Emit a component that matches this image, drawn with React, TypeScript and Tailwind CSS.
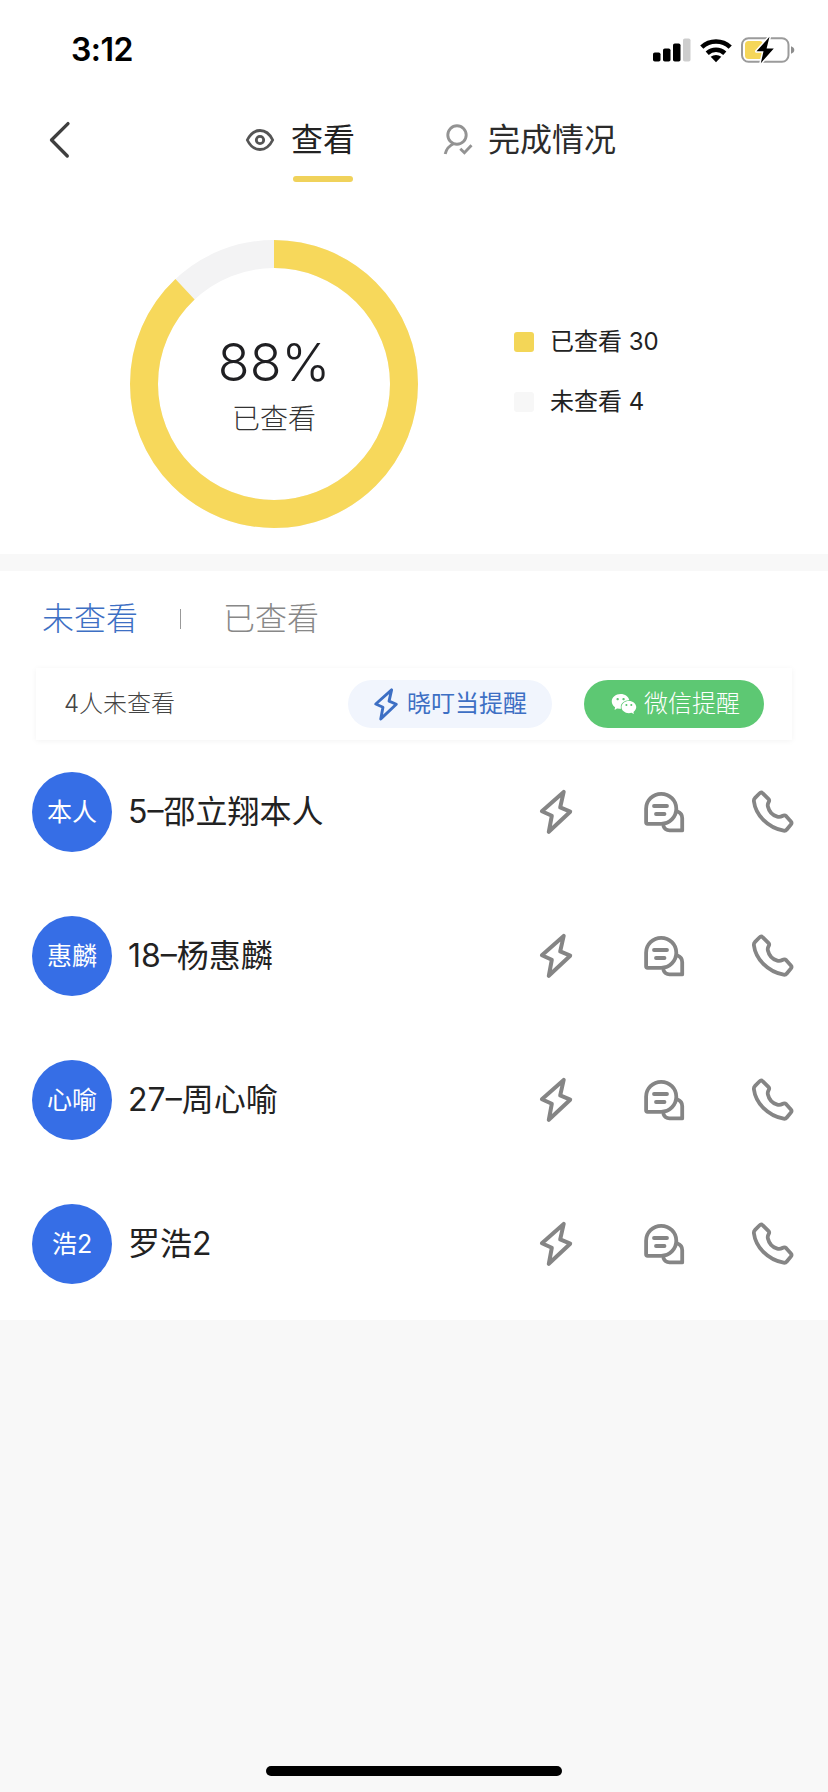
import type { ReactNode } from 'react';
import { AiFillWechat } from 'react-icons/ai';

type Student = {
  id: number;
  short: string;
  name: string;
};

const VIEWED = 30;
const NOT_VIEWED = 4;

const students: Student[] = [
  { id: 1, short: '本人', name: '5–邵立翔本人' },
  { id: 2, short: '惠麟', name: '18–杨惠麟' },
  { id: 3, short: '心喻', name: '27–周心喻' },
  { id: 4, short: '浩2', name: '罗浩2' },
];

function BoltIcon({ className, strokeWidth = 4 }: { className?: string; strokeWidth?: number }) {
  return (
    <svg viewBox="0 0 44 48" fill="none" stroke="currentColor" strokeWidth={strokeWidth} strokeLinejoin="round" className={className}>
      <path d="M29.7 3.9 26.2 19.4 36.2 23.7 14.8 43.8 17.8 27.8 7.9 23.3Z" />
    </svg>
  );
}

function ChatIcon() {
  return (
    <svg viewBox="0 0 48 48" fill="none" stroke="currentColor" strokeWidth="3.8" strokeLinecap="round" strokeLinejoin="round" className="w-12 h-12">
      <path d="M8.1 20.8a15.1 15 0 0 1 30.2 0 15.1 15 0 0 1-15.1 15H9.6a1.5 1.5 0 0 1-1.5-1.5Z" />
      <path d="M16 18h13M18 26h8.5" />
      <path d="M39.5 23.6c3 1.2 4.7 3.4 4.7 6.6v12.2H31.5c-3 0-5-1.4-6-4.2" />
    </svg>
  );
}

function PhoneIcon() {
  return (
    <svg viewBox="0 0 48 48" fill="none" stroke="currentColor" strokeWidth="3.8" strokeLinejoin="round" className="w-12 h-12">
      <path d="M16.8 5.3 22.6 11.2c.8.8.7 1.7.1 2.7-.9 1.500-1.200 3-.8 4.600 1.200 5.200 4.600 8.800 9.400 10.100 1.800.5 3.400.3 5-.6 1.400-.8 2.800-.9 3.900.2l4.700 5.300c.8.9.8 1.900.1 2.800l-4.200 5.200c-.8 1-1.800 1.400-3.200 1.200C21.500 39.600 9.600 26.800 7.900 13.200c-.2-1.500.2-2.400 1.200-3.400l4.300-4.300c1.100-1.100 2.300-1.200 3.400-.2Z" />
    </svg>
  );
}

function StatusBar() {
  return (
    <div className="flex items-center justify-between h-[100px] pl-[71px] pr-[33px]">
      <span className="text-[32px] leading-none font-semibold text-black tracking-[-0.5px]">3:12</span>
      <div className="flex items-center gap-[9px]">
        <svg viewBox="0 0 38 24" className="w-[38px] h-6">
          <rect x="0" y="14.500" width="7.500" height="9" rx="1.800" />
          <rect x="10" y="10.500" width="7.500" height="13" rx="1.800" />
          <rect x="20" y="5.500" width="7.500" height="18" rx="1.800" />
          <rect x="30" y="0.500" width="7.500" height="23" rx="1.800" fill="#cdcdcd" />
        </svg>
        <svg viewBox="0 0 32 25" fill="none" stroke="#000" strokeWidth="4.600" className="w-8 h-[25px]">
          <path d="M1.800 9.200a20.500 20.500 0 0 1 28.400 0" />
          <path d="M7.200 15.200a13 13 0 0 1 17.600 0" />
          <path d="M10.700 18.800a8.500 8.500 0 0 1 10.600 0L16 24.300Z" fill="#000" stroke="none" />
        </svg>
        <svg viewBox="0 0 54 28" className="w-[54px] h-7">
          <rect x="1" y="2.200" width="46.500" height="23.600" rx="6.500" fill="none" stroke="#9b9b9b" strokeWidth="2" />
          <path d="M50 10.200q3.300 1.200 3.300 3.800T50 17.800Z" fill="#8d8d8d" />
          <rect x="4" y="5" width="18" height="18" rx="3.500" fill="#f5d659" />
          <path d="M28.500.8 15.500 15.300h7L19.800 27.200 32.800 12.400h-7.200Z" stroke="#fff" strokeWidth="3" paintOrder="stroke" strokeLinejoin="round" />
        </svg>
      </div>
    </div>
  );
}

function NavTabs() {
  return (
    <div className="flex h-[100px] pl-[49px]">
      <svg viewBox="0 0 22 40" fill="none" stroke="#3f3f3f" strokeWidth="3.300" strokeLinecap="round" strokeLinejoin="round" className="w-[22px] h-10 mt-5">
        <path d="M19 3.600 2.500 20 18.300 36" />
      </svg>
      <div className="flex items-start ml-[174px] pt-4">
        <svg viewBox="0 0 30 24" fill="none" stroke="#555" strokeWidth="2.800" className="w-[30px] h-6 mt-3">
          <path d="M2.300 12C5.500 5.400 10 2.500 15 2.500S24.500 5.400 27.700 12C24.500 18.600 20 21.500 15 21.500S5.500 18.600 2.300 12Z" strokeLinejoin="round" />
          <circle cx="15" cy="12" r="3.700" />
        </svg>
        <div className="flex flex-col items-center ml-4">
          <span className="text-[32px] leading-[48px] text-[#222]">查看</span>
          <span className="w-[60px] h-1.5 mt-3 rounded-full bg-[#f0d25b]" />
        </div>
      </div>
      <div className="flex items-start ml-[87px] pt-4">
        <svg viewBox="0 0 32 32" fill="none" stroke="#939393" strokeWidth="2.900" className="w-8 h-8 mt-[7px]">
          <circle cx="15" cy="12" r="9.200" />
          <path d="M12 20.500C7.500 22.500 4.300 26 3.200 31" />
          <path d="M18.300 25.800 22.400 29.700 29.500 22.300" />
        </svg>
        <span className="ml-[14px] text-[32px] leading-[48px] text-[#2b2b2b]">完成情况</span>
      </div>
    </div>
  );
}

function Donut({ percent }: { percent: number }) {
  return (
    <div className="grid place-items-center w-72 h-72">
      <svg viewBox="0 0 288 288" fill="none" strokeWidth="28" className="col-start-1 row-start-1 w-72 h-72 -rotate-90">
        <circle cx="144" cy="144" r="130" stroke="#f3f3f4" />
        <circle cx="144" cy="144" r="130" stroke="#f7d85b" pathLength="100" strokeDasharray={`${percent} 100`} />
      </svg>
      <div className="col-start-1 row-start-1 flex flex-col items-center pt-1">
        <span className="text-[52px] leading-[60px] font-light text-[#1f1f22]">88%</span>
        <span className="mt-1.5 text-[28px] leading-10 font-light text-[#333]">已查看</span>
      </div>
    </div>
  );
}

function LegendItem({ color, label }: { color: string; label: string }) {
  return (
    <li className="flex items-center h-[60px]">
      <span className={`w-5 h-5 rounded-[3px] ${color}`} />
      <span className="ml-4 text-2xl leading-9 text-[#222]">{label}</span>
    </li>
  );
}

function ReminderButton({ className, children }: { className: string; children: ReactNode }) {
  return (
    <button type="button" className={`flex items-center h-12 rounded-full text-2xl leading-none ${className}`}>
      {children}
    </button>
  );
}

function StudentRow({ student }: { student: Student }) {
  return (
    <li className="flex items-center h-36 pl-8 pr-[34px]">
      <span className="flex items-center justify-center w-20 h-20 rounded-full bg-[#366ee6] text-[25px] leading-none text-white">
        {student.short}
      </span>
      <span className="ml-4 text-[32px] leading-[48px] text-[#222]">{student.name}</span>
      <div className="flex items-center gap-[60px] ml-auto text-[#858585]">
        <BoltIcon className="w-11 h-12" />
        <ChatIcon />
        <PhoneIcon />
      </div>
    </li>
  );
}

export default function App() {
  return (
    <div className="flex flex-col w-[828px] h-[1792px] bg-[#f8f8f8] font-[Inter,'Noto_Sans_CJK_SC',sans-serif]">
      <header className="h-[554px] bg-white">
        <StatusBar />
        <NavTabs />
        <section className="flex pt-10 pl-[130px]">
          <Donut percent={88} />
          <ul className="pt-[72px] ml-24">
            <LegendItem color="bg-[#f3d657]" label={`已查看 ${VIEWED}`} />
            <LegendItem color="bg-[#f7f7f7]" label={`未查看 ${NOT_VIEWED}`} />
          </ul>
        </section>
      </header>

      <main className="h-[749px] mt-[17px] bg-white">
        <nav className="flex items-center h-24 pl-[42px] text-[32px] leading-[48px] font-light">
          <span className="text-[#3d6fc4]">未查看</span>
          <span className="w-px h-5 mx-[42px] bg-[#999]" />
          <span className="text-[#888]">已查看</span>
        </nav>

        <div className="flex items-center h-[72px] mt-px mx-9 pl-7 pr-7 bg-white shadow-[0_1px_6px_rgba(0,0,0,0.05)]">
          <span className="text-2xl leading-9 font-light text-[#444]">{NOT_VIEWED}人未查看</span>
          <ReminderButton className="w-[204px] ml-auto pl-[22px] bg-[#f1f5fd] text-[#3d6fc4]">
            <BoltIcon className="w-8 h-[35px]" />
            <span className="ml-[5px]">晓叮当提醒</span>
          </ReminderButton>
          <ReminderButton className="w-[180px] ml-8 pl-[26px] bg-[#5dc873] text-white font-light">
            <AiFillWechat className="w-7 h-7" />
            <span className="ml-1.5">微信提醒</span>
          </ReminderButton>
        </div>

        <ul>
          {students.map((student) => (
            <StudentRow key={student.id} student={student} />
          ))}
        </ul>
      </main>

      <div className="w-[296px] h-2.5 mx-auto mt-auto mb-4 rounded-full bg-black" />
    </div>
  );
}
